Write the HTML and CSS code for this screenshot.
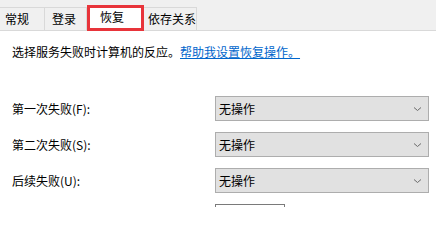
FILE: index.html
```html
<!DOCTYPE html>
<html lang="zh-CN">
<head>
<meta charset="utf-8">
<link rel="stylesheet" href="styles.css">
</head>
<body>
<div class="tabs">
  <div class="tab tab-first">常规</div>
  <div class="tab tab-second">登录</div>
  <div class="tab tab-active">恢复</div>
  <div class="tab tab-last">依存关系</div>
</div>
<div class="content">
  <p class="intro">选择服务失败时计算机的反应。<a class="link" href="#">帮助我设置恢复操作。</a></p>
  <div class="rows">
    <div class="label">第一次失败(F):</div>
    <div class="select"><span>无操作</span><svg class="chev" width="9" height="6" viewBox="0 0 9 6"><path d="M1 1.5 L4.5 4.5 L8 1.5" fill="none" stroke="#6b6b6b" stroke-width="1"/></svg></div>
    <div class="label">第二次失败(S):</div>
    <div class="select"><span>无操作</span><svg class="chev" width="9" height="6" viewBox="0 0 9 6"><path d="M1 1.5 L4.5 4.5 L8 1.5" fill="none" stroke="#6b6b6b" stroke-width="1"/></svg></div>
    <div class="label">后续失败(U):</div>
    <div class="select"><span>无操作</span><svg class="chev" width="9" height="6" viewBox="0 0 9 6"><path d="M1 1.5 L4.5 4.5 L8 1.5" fill="none" stroke="#6b6b6b" stroke-width="1"/></svg></div>
    <div class="label"></div>
    <div class="input"></div>
  </div>
</div>
</body>
</html>
```
FILE: styles.css
```css
html, body {
  margin: 0;
  padding: 0;
  background: #ffffff;
}
body {
  font-family: "Noto Sans CJK SC", "Noto Sans", sans-serif;
  font-size: 12px;
  color: #000000;
  width: 436px;
  height: 207px;
  overflow: hidden;
}
.tabs {
  display: flex;
  align-items: flex-end;
  height: 30px;
  background: #f0f0f0;
  border-bottom: 1px solid #d9d9d9;
}
.tab {
  box-sizing: border-box;
  height: 23px;
  line-height: 22px;
  border-right: 1px solid #d9d9d9;
  border-top: 1px solid #d9d9d9;
  background: #f0f0f0;
}
.tab-first {
  width: 45px;
  padding-left: 5px;
}
.tab-second {
  width: 42px;
  padding-left: 7px;
}
.tab-active {
  width: 57px;
  height: 26px;
  margin-bottom: -1px;
  padding-left: 10px;
  line-height: 17px;
  background: #ffffff;
  border: 3px solid #e8343a;
}
.tab-last {
  width: 53px;
  padding-left: 4px;
}
.content {
  padding-left: 12px;
}
.intro {
  margin: 13px 0 0 0;
  line-height: 16px;
  white-space: nowrap;
}
.link {
  color: #0066cc;
  text-decoration: underline;
}
.rows {
  margin-top: 36px;
  display: grid;
  grid-template-columns: 203px 214px;
  grid-auto-rows: 25px;
  row-gap: 11px;
}
.label {
  line-height: 25px;
}
.select {
  box-sizing: border-box;
  display: flex;
  align-items: center;
  justify-content: space-between;
  padding: 0 6px 0 3px;
  background: #e1e1e1;
  border: 1px solid #adadad;
  line-height: 23px;
}
.chev {
  display: block;
}
.input {
  box-sizing: border-box;
  width: 70px;
  height: 25px;
  background: #ffffff;
  border: 1px solid #7a7a7a;
}
```
